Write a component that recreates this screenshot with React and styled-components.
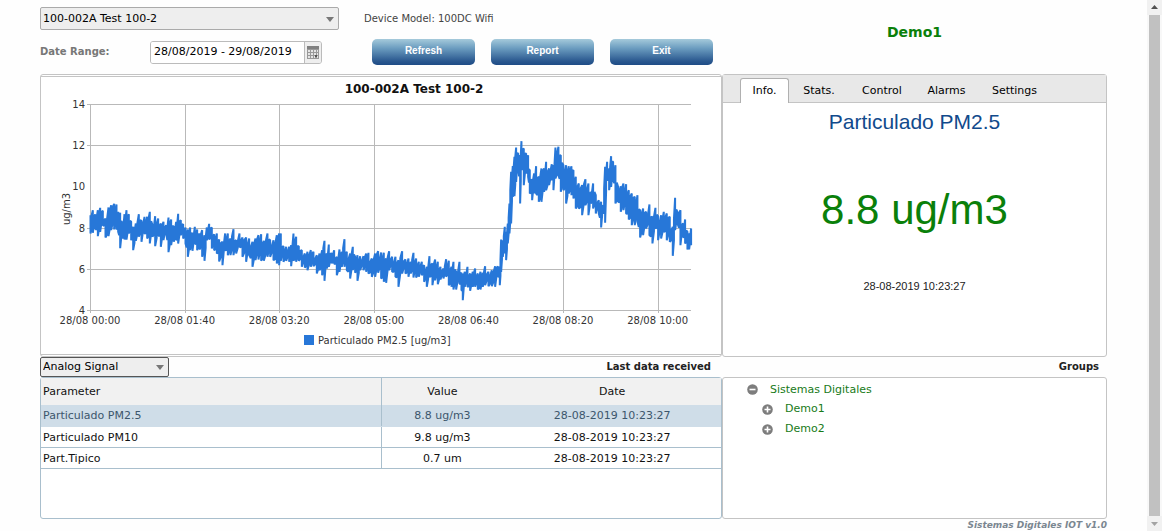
import React, { useState } from "react";
import styled, { createGlobalStyle } from "styled-components";

const GlobalStyle = createGlobalStyle`
  * {
    box-sizing: border-box;
  }

  body {
    margin: 0;
    background: #fefefe;
    color: #222;
    font-family: Verdana, "DejaVu Sans", sans-serif;
    font-size: 11px;
    line-height: 14px;
  }

  button, input, select {
    font: inherit;
    color: inherit;
    margin: 0;
  }
`;

const Page = styled.div`
  display: grid;
  grid-template-columns: minmax(0, 1fr) 15px;
  height: 100vh;
  overflow: hidden;
`;

const Content = styled.main`
  padding: 0 40px;
`;

const Columns = styled.div`
  display: grid;
  grid-template-columns: minmax(0, 682fr) minmax(0, 385fr);
`;

const Header = styled(Columns)`
  height: 74px;
`;

const Controls = styled.div`
  display: flex;
  flex-direction: column;
  padding-top: 7px;
  gap: 9px;
`;

const ControlRow = styled.div`
  display: flex;
  align-items: center;
  gap: ${(props) => props.$gap};
`;

const SelectWrap = styled.div`
  position: relative;
  width: ${(props) => props.$width};

  select {
    appearance: none;
    display: block;
    width: 100%;
    height: ${(props) => props.$height};
    padding: 0 20px 0 2px;
    border: 1px solid ${(props) => props.$border};
    border-radius: 2px;
    background: #eee;
    color: #000;
  }

  svg {
    position: absolute;
    right: 5px;
    top: 50%;
    margin-top: -2px;
    pointer-events: none;
  }
`;

const DeviceModel = styled.span`
  color: #444;
  font-size: 10px;
`;

const DateLabel = styled.label`
  width: 110px;
  color: #777;
  font-size: 10px;
  font-weight: bold;
`;

const DateField = styled.div`
  display: flex;
  width: 172px;
  height: 23px;
  border: 1px solid #bbb;
  border-radius: 3px;
  overflow: hidden;

  input {
    flex: 1;
    min-width: 0;
    padding: 0 0 0 3px;
    border: 0;
    color: #000;
    background: #fff;
  }

  button {
    display: flex;
    align-items: center;
    justify-content: center;
    width: 17px;
    padding: 0;
    border: 0;
    border-left: 1px solid #bbb;
    background: #eee;
  }
`;

const Buttons = styled.div`
  display: flex;
  gap: 16px;
  margin-left: 50px;
`;

const ActionButton = styled.button`
  width: 103px;
  height: 26px;
  padding: 0 0 2px;
  border: 0;
  border-radius: 5px;
  background: linear-gradient(#a5cadb, #6c9dc0 35%, #2a588f 85%, #1f4c86);
  color: #fff;
  font-family: "Liberation Sans", Arial, sans-serif;
  font-size: 10px;
  font-weight: bold;
`;

const UserName = styled.h1`
  margin: 0;
  padding-top: 23px;
  color: #0a800a;
  font-size: 14px;
  line-height: 18px;
  text-align: center;
`;

const Panel = styled.section`
  min-width: 0;
  min-height: ${(props) => props.$height};
  border: 1px solid ${(props) => props.$border || "#c4c4c4"};
  border-radius: 3px;
  background: #fff;
`;

const ChartPanel = styled(Panel)`
  padding: 1px 0;
`;

const ChartInner = styled.div`
  min-height: 279px;
  border: solid #c4c4c4;
  border-width: 1px 0;
  overflow: hidden;

  h2 {
    margin: 5px 0 0;
    padding-left: 66px;
    color: #111;
    font-size: 12px;
    line-height: 14px;
    text-align: center;
  }

  svg {
    display: block;
    width: 100%;
  }

  text {
    font-size: 10px;
    fill: #333;
  }
`;

const TabBar = styled.div`
  display: flex;
  align-items: flex-end;
  height: 28px;
  padding-left: 17px;
  border-bottom: 1px solid #c4c4c4;
  background: #e8e8e8;
`;

const Tab = styled.button`
  width: ${(props) => props.$width};
  height: 25px;
  margin-bottom: -1px;
  padding: 0;
  border: 1px solid ${(props) => (props.$active ? "#b0b0b0" : "transparent")};
  border-bottom: 0;
  border-radius: 3px 3px 0 0;
  background: ${(props) => (props.$active ? "#fff" : "transparent")};
  color: #000;
`;

const Reading = styled.div`
  display: flex;
  flex-direction: column;
  align-items: center;
  font-family: "Liberation Sans", Arial, sans-serif;
`;

const ReadingName = styled.h2`
  margin: 6px 0 0;
  color: #114a8c;
  font-size: 21px;
  line-height: 26px;
  font-weight: normal;
`;

const ReadingValue = styled.p`
  margin: 49px 0 0;
  color: #0a800a;
  font-size: 42px;
  line-height: 52px;
`;

const ReadingDate = styled.p`
  margin: 42px 0 0;
  color: #222;
  font-size: 11px;
  line-height: 16px;
`;

const Bar = styled(Columns)`
  height: 20px;
`;

const BarCell = styled.div`
  display: flex;
  align-items: center;
  justify-content: space-between;
  padding-right: ${(props) => props.$inset};
`;

const Heading = styled.h2`
  margin: 0 0 0 auto;
  color: #222;
  font-size: 10px;
  line-height: 14px;
`;

const DataTable = styled.table`
  width: 100%;
  table-layout: fixed;
  border-collapse: collapse;
  color: #111;

  th, td {
    height: 21px;
    padding: 2px 2px 0;
    border-bottom: 1px solid #a9bfcd;
    font-weight: normal;
    text-align: center;
  }

  th {
    height: 27px;
    padding-top: 0;
    border-bottom: 0;
    background: #f1f1f1;
  }

  th:first-child, td:first-child {
    width: 50%;
    border-right: 1px solid #a9bfcd;
    text-align: left;
  }

  th:nth-child(2) {
    width: 18%;
  }
`;

const DataRow = styled.tr`
  background: ${(props) => (props.$selected ? "#cfdde8" : "#fff")};
  color: ${(props) => (props.$selected ? "#3c566c" : "#111")};

  && td {
    border-bottom-color: ${(props) => (props.$selected ? "#cfdde8" : "#a9bfcd")};
  }
`;

const Tree = styled.ul`
  margin: 0;
  padding: ${(props) => (props.$nested ? "0 0 0 15px" : "2px 0 0 24px")};
  list-style: none;
`;

const TreeRow = styled.div`
  display: flex;
  align-items: center;
  gap: 12px;
  height: ${(props) => (props.$root ? "19px" : "20px")};

  button {
    display: flex;
    padding: 0;
    border: 0;
    background: none;
  }

  a {
    color: #187a18;
    text-decoration: none;
  }
`;

const Footer = styled.footer`
  color: #7b8791;
  font-size: 9px;
  line-height: 12px;
  font-style: italic;
  font-weight: bold;
  text-align: right;
`;

const ScrollTrack = styled.div`
  display: flex;
  flex-direction: column;
  align-items: center;
  background: #f8f8f8;

  svg {
    flex: none;
    width: 15px;
    height: 15px;
    background: #f1f1f1;
  }
`;

const ScrollThumb = styled.div`
  flex: 1;
  width: 11px;
  background: #c1c1c1;
`;

// each sample is x, highest and lowest line position, in thirds of a plot pixel
const nightSamples = [
  [181,375,430],[188,360,428],[195,372,415],[203,360,438],[210,353,425],[218,362,405],[226,385,442],[235,352,438],
  [243,345,420],[252,341,418],[259,343,418],[264,365,425],[270,368,474],[277,400,445],[283,372,448],[289,360,448],
  [296,372,430],[303,395,450],[309,410,480],[317,400,452],[326,372,440],[334,392,455],[343,380,430],[351,380,445],
  [359,365,460],[367,405,440],[375,378,468],[384,385,435],[392,400,470],[400,395,450],[408,405,430],[415,382,486],
  [423,388,465],[431,410,455],[438,395,450],[444,371,460],[452,390,435],[459,402,445],[466,412,460],[473,418,500],
  [480,412,480],[487,430,482],[494,410,460],[501,418,480],[508,430,478],[516,420,500],[523,435,512],[530,412,450],
  [537,401,448],[545,412,475],[552,432,480],[560,430,490],[567,448,514],[577,455,525],[585,430,480],[593,430,495],
  [601,445,495],[610,417,495],[618,450,490],[628,430,470],[637,442,500],[648,442,515],[657,445,495],[667,455,530],
  [676,445,510],[685,435,508],[693,432,512],[701,452,512],[712,430,500],[720,450,500],[730,450,510],[740,435,520],
  [747,430,525],[752,430,512],[760,468,515],[768,470,512],[777,470,515],[783,465,528],[790,430,512],[798,440,515],
  [806,468,512],[815,480,530],[824,490,532],[832,485,540],[842,480,530],[850,485,528],[860,495,550],[868,490,540],
  [876,480,555],[883,452,572],[890,490,535],[896,463,530],[905,490,520],[912,480,520],[920,500,555],[928,478,545],
  [935,485,530],[943,447,530],[950,485,540],[960,490,565],[968,470,540],[975,500,548],[982,495,572],[990,498,540],
  [1000,498,540],[1008,490,545],[1015,488,550]
];

const morningSamples = [
  [5,505,560],[15,490,560],[24,483,548],[33,487,565],[41,488,575],[48,505,578],[57,483,540],[66,500,545],
  [76,500,560],[85,510,590],[96,483,550],[106,508,550],[115,505,560],[122,515,550],[130,488,562],[138,505,562],
  [146,515,560],[155,515,555],[162,525,575],[170,530,590],[178,498,560],[187,520,585],[195,508,570],[203,515,582],
  [211,530,568],[220,535,565],[228,507,560],[236,512,585],[244,530,590],[250,515,598],[258,545,598],[268,515,580],
  [274,548,600],[278,550,630],[284,545,590],[292,530,590],[300,550,602],[308,545,590],[315,535,590],[323,550,598],
  [331,545,598],[338,548,590],[345,528,585],[355,545,588],[365,540,588],[375,528,590],[383,528,560],[389,530,585],
  [393,448,545],[398,450,500],[404,410,490],[408,425,510],[413,400,460],[418,340,430],[423,245,400],[428,228,320],
  [433,200,318],[438,172,275],[444,190,230],[450,195,340],[454,153,222],[461,175,285],[468,190,250],[474,195,260],
  [479,240,310],[486,270,330],[492,250,310],[498,228,310],[506,260,335],[514,235,335],[522,235,305],[528,215,300],
  [537,235,285],[545,222,270],[550,225,300],[556,172,265],[565,170,255],[572,195,305],[580,225,300],[588,225,340],
  [596,228,310],[604,228,315],[610,240,325],[617,260,355],[626,280,355],[636,285,375],[646,267,345],[655,280,375],
  [662,305,340],[669,280,355],[677,315,370],[686,330,370],[693,335,412],[699,345,370],[705,230,398],[711,215,260],
  [717,235,300],[723,198,290],[729,215,270],[736,225,340],[744,290,335],[752,288,365],[760,280,360],[768,282,370],
  [776,300,388],[785,310,405],[794,320,405],[802,315,395],[810,360,442],[819,355,435],[828,365,415],[838,343,435],
  [847,380,460],[856,353,415],[864,378,450],[873,375,445],[881,365,425],[890,370,450],[899,380,455],[908,410,497],
  [915,323,420],[922,365,400],[931,360,465],[939,400,440],[945,388,460],[952,425,478],[957,430,478],[963,415,465]
];

const samples = [
  ...nightSamples.map(([x, hi, lo]) => [x - 181, hi - 43, lo - 43]),
  ...morningSamples.map(([x, hi, lo]) => [x + 839, hi - 43, lo - 43])
];

// the line narrows between two samples, by an amount that varies along it
const tracePath = samples
  .map(([x, hi, lo], i) => {
    const [nx, nhi, nlo] = samples[i + 1] || samples[i];
    const mx = (x + nx) / 2;
    const room = (lo - hi + nlo - nhi) / 2;
    const pinchTop = Math.min(room / 3, 8 + ((i * 7) % 4) * 6);
    const pinchBottom = Math.min(room / 3, 8 + ((i * 5 + 2) % 4) * 6);
    const top = (hi + nhi) / 2 + pinchTop;
    const bottom = (lo + nlo) / 2 - pinchBottom;
    return `${i === 0 ? "M" : "L"}${x} ${hi}V${lo}L${mx} ${bottom}V${top}`;
  })
  .join("");

const hours = ["28/08 00:00", "28/08 01:40", "28/08 03:20", "28/08 05:00", "28/08 06:40", "28/08 08:20", "28/08 10:00"];
const levels = [14, 12, 10, 8, 6, 4];
// no grid line at 06:40, and none at level 10
const gridHours = [0, 1, 2, 3, 5, 6];
const gridLevels = [0, 1, 3, 4, 5];

const Arrow = () => (
  <svg width="8" height="5" aria-hidden="true">
    <path d="M0 0H8L4 5Z" fill="#777" />
  </svg>
);

const CalendarIcon = () => (
  <svg width="12" height="13" shapeRendering="crispEdges" aria-hidden="true">
    <path d="M0 0H12V13H0Z" fill="#999" />
    <path d="M0 0H12V3H0Z" fill="#808080" />
    <path d="M1 4H3V6H1ZM4 4H6V6H4ZM7 4H9V6H7ZM10 4H11V6H10ZM1 7H3V9H1ZM4 7H6V9H4ZM7 7H9V9H7ZM10 7H11V9H10ZM1 10H3V12H1ZM4 10H6V12H4ZM7 10H8V12H7ZM10 10H11V12H10Z" fill="#e5e5e5" />
    <path d="M8 9H10V11H8Z" fill="#555" />
  </svg>
);

const ToggleIcon = ({ open }) => (
  <svg width="11" height="11" viewBox="0 0 11 11" aria-hidden="true">
    <circle cx="5.5" cy="5.5" r="5.3" fill="#7d7d7d" />
    <path d={open ? "M2.5 5.5H8.5" : "M2.5 5.5H8.5M5.5 2.5V8.5"} stroke="#fff" strokeWidth="1.6" />
  </svg>
);

function Chart() {
  return (
    <svg viewBox="0 0 680 258" role="img" aria-label="Particulado PM2.5 [ug/m3]">
      <g stroke="#b9b9b9" shapeRendering="crispEdges">
        {gridLevels.map((i) => (
          <path key={i} d={`M46 ${8.5 + i * 41.2}H650`} />
        ))}
        {gridHours.map((i) => (
          <path key={i} d={`M${49.5 + i * 94.6} 8V217`} />
        ))}
      </g>
      <g transform="translate(49.5 8.5) scale(0.3333)">
        <path d={tracePath} fill="none" stroke="#2777d8" strokeWidth="6" strokeLinejoin="bevel" />
      </g>
      {levels.map((level, i) => (
        <text key={level} x="44" y={12 + i * 41.2} textAnchor="end">{level}</text>
      ))}
      {hours.map((hour, i) => (
        <text key={hour} x={49 + i * 94.6} y="228" textAnchor="middle">{hour}</text>
      ))}
      <text transform="translate(29 113) rotate(-90)" textAnchor="middle">ug/m3</text>
      <rect x="263" y="239" width="10" height="10" fill="#2777d8" />
      <text x="277" y="248">Particulado PM2.5 [ug/m3]</text>
    </svg>
  );
}

const tabs = [
  { name: "Info.", width: "49px" },
  { name: "Stats.", width: "60px" },
  { name: "Control", width: "66px" },
  { name: "Alarms", width: "63px" },
  { name: "Settings", width: "73px" }
];

const rows = [
  ["Particulado PM2.5", "8.8 ug/m3", "28-08-2019 10:23:27"],
  ["Particulado PM10", "9.8 ug/m3", "28-08-2019 10:23:27"],
  ["Part.Tipico", "0.7 um", "28-08-2019 10:23:27"]
];

export default function App() {
  const [active, setActive] = useState("Info.");
  const [selected, setSelected] = useState(0);

  return (
    <Page>
      <GlobalStyle />
      <Content>
        <Header>
          <Controls>
            <ControlRow $gap="25px">
              <SelectWrap $width="299px" $height="23px" $border="#aaa">
                <select aria-label="Device">
                  <option>100-002A Test 100-2</option>
                </select>
                <Arrow />
              </SelectWrap>
              <DeviceModel>Device Model: 100DC Wifi</DeviceModel>
            </ControlRow>
            <ControlRow $gap="0">
              <DateLabel htmlFor="range">Date Range:</DateLabel>
              <DateField>
                <input id="range" type="text" defaultValue="28/08/2019 - 29/08/2019" />
                <button type="button" aria-label="Open calendar"><CalendarIcon /></button>
              </DateField>
              <Buttons>
                <ActionButton type="button">Refresh</ActionButton>
                <ActionButton type="button">Report</ActionButton>
                <ActionButton type="button">Exit</ActionButton>
              </Buttons>
            </ControlRow>
          </Controls>
          <UserName>Demo1</UserName>
        </Header>

        <Columns>
          <ChartPanel $height="283px">
            <ChartInner>
              <h2>100-002A Test 100-2</h2>
              <Chart />
            </ChartInner>
          </ChartPanel>
          <Panel $height="283px">
            <TabBar role="tablist">
              {tabs.map((tab) => (
                <Tab
                  key={tab.name}
                  type="button"
                  role="tab"
                  aria-selected={tab.name === active}
                  $active={tab.name === active}
                  $width={tab.width}
                  onClick={() => setActive(tab.name)}
                >
                  {tab.name}
                </Tab>
              ))}
            </TabBar>
            <Reading>
              <ReadingName>Particulado PM2.5</ReadingName>
              <ReadingValue>8.8 ug/m3</ReadingValue>
              <ReadingDate>28-08-2019 10:23:27</ReadingDate>
            </Reading>
          </Panel>
        </Columns>

        <Bar>
          <BarCell $inset="11px">
            <SelectWrap $width="129px" $height="20px" $border="#555">
              <select aria-label="Signal type">
                <option>Analog Signal</option>
              </select>
              <Arrow />
            </SelectWrap>
            <Heading>Last data received</Heading>
          </BarCell>
          <BarCell $inset="8px">
            <Heading>Groups</Heading>
          </BarCell>
        </Bar>

        <Columns>
          <Panel $height="142px" $border="#a9bfcd">
            <DataTable>
              <thead>
                <tr>
                  <th>Parameter</th>
                  <th>Value</th>
                  <th>Date</th>
                </tr>
              </thead>
              <tbody>
                {rows.map((row, i) => (
                  <DataRow key={row[0]} $selected={i === selected} onClick={() => setSelected(i)}>
                    {row.map((cell, j) => <td key={j}>{cell}</td>)}
                  </DataRow>
                ))}
              </tbody>
            </DataTable>
          </Panel>
          <Panel $height="142px">
            <Tree>
              <li>
                <TreeRow $root>
                  <button type="button" aria-label="Collapse"><ToggleIcon open /></button>
                  <a href="#sistemas">Sistemas Digitales</a>
                </TreeRow>
                <Tree $nested>
                  {["Demo1", "Demo2"].map((name) => (
                    <li key={name}>
                      <TreeRow>
                        <button type="button" aria-label="Expand"><ToggleIcon /></button>
                        <a href={`#${name}`}>{name}</a>
                      </TreeRow>
                    </li>
                  ))}
                </Tree>
              </li>
            </Tree>
          </Panel>
        </Columns>
        <Footer>Sistemas Digitales IOT v1.0</Footer>
      </Content>
      <ScrollTrack aria-hidden="true">
        <svg viewBox="0 0 15 15"><path d="M4 9H11L7.5 5Z" fill="#505050" /></svg>
        <ScrollThumb />
        <svg viewBox="0 0 15 15"><path d="M4 6H11L7.5 10Z" fill="#a3a3a3" /></svg>
      </ScrollTrack>
    </Page>
  );
}
